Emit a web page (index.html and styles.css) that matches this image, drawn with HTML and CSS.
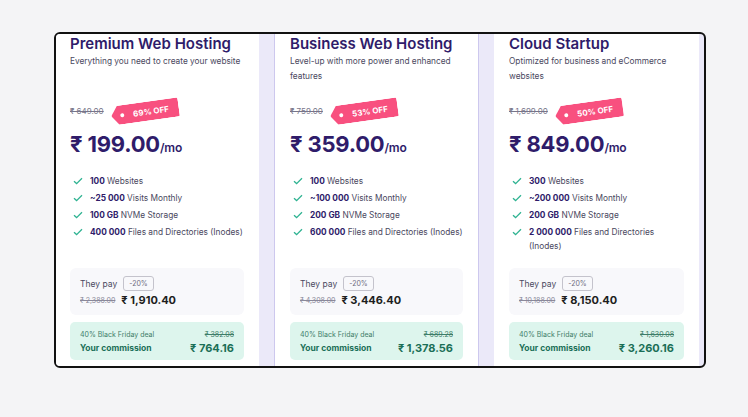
FILE: index.html
```html
<!DOCTYPE html>
<html>
<head>
<meta charset="utf-8">
<link rel="stylesheet" href="styles.css">
</head>
<body>
<div class="frame">
  <div class="card c1">
    <div class="title">Premium Web Hosting</div>
    <div class="sub">Everything you need to create your website</div>
    <div class="oldrow"><span class="old">₹ 649.00</span><span class="tag"><span class="dot"></span>69% OFF</span></div>
    <div class="price">₹ 199.00<span class="mo">/mo</span></div>
    <ul class="feats">
      <li><svg class="chk" viewBox="0 0 10 8"><path d="M1 4.2 L3.6 6.6 L9 1.2"/></svg><span><b>100</b> Websites</span></li>
      <li><svg class="chk" viewBox="0 0 10 8"><path d="M1 4.2 L3.6 6.6 L9 1.2"/></svg><span><b>~25 000</b> Visits Monthly</span></li>
      <li><svg class="chk" viewBox="0 0 10 8"><path d="M1 4.2 L3.6 6.6 L9 1.2"/></svg><span><b>100 GB</b> NVMe Storage</span></li>
      <li><svg class="chk" viewBox="0 0 10 8"><path d="M1 4.2 L3.6 6.6 L9 1.2"/></svg><span><b>400 000</b> Files and Directories (Inodes)</span></li>
    </ul>
    <div class="pay">
      <div class="payrow"><span>They pay</span><span class="pct">-20%</span></div>
      <div class="payrow2"><span class="old2">₹ 2,388.00</span><span class="paid">₹ 1,910.40</span></div>
    </div>
    <div class="comm">
      <div class="crow1"><span>40% Black Friday deal</span><span class="cold">₹ 382.08</span></div>
      <div class="crow2"><span>Your commission</span><span class="cval">₹ 764.16</span></div>
    </div>
  </div>
  <div class="card c2">
    <div class="title">Business Web Hosting</div>
    <div class="sub">Level-up with more power and enhanced features</div>
    <div class="oldrow"><span class="old">₹ 759.00</span><span class="tag"><span class="dot"></span>53% OFF</span></div>
    <div class="price">₹ 359.00<span class="mo">/mo</span></div>
    <ul class="feats">
      <li><svg class="chk" viewBox="0 0 10 8"><path d="M1 4.2 L3.6 6.6 L9 1.2"/></svg><span><b>100</b> Websites</span></li>
      <li><svg class="chk" viewBox="0 0 10 8"><path d="M1 4.2 L3.6 6.6 L9 1.2"/></svg><span><b>~100 000</b> Visits Monthly</span></li>
      <li><svg class="chk" viewBox="0 0 10 8"><path d="M1 4.2 L3.6 6.6 L9 1.2"/></svg><span><b>200 GB</b> NVMe Storage</span></li>
      <li><svg class="chk" viewBox="0 0 10 8"><path d="M1 4.2 L3.6 6.6 L9 1.2"/></svg><span><b>600 000</b> Files and Directories (Inodes)</span></li>
    </ul>
    <div class="pay">
      <div class="payrow"><span>They pay</span><span class="pct">-20%</span></div>
      <div class="payrow2"><span class="old2">₹ 4,308.00</span><span class="paid">₹ 3,446.40</span></div>
    </div>
    <div class="comm">
      <div class="crow1"><span>40% Black Friday deal</span><span class="cold">₹ 689.28</span></div>
      <div class="crow2"><span>Your commission</span><span class="cval">₹ 1,378.56</span></div>
    </div>
  </div>
  <div class="card c3">
    <div class="title">Cloud Startup</div>
    <div class="sub">Optimized for business and eCommerce websites</div>
    <div class="oldrow"><span class="old">₹ 1,699.00</span><span class="tag"><span class="dot"></span>50% OFF</span></div>
    <div class="price">₹ 849.00<span class="mo">/mo</span></div>
    <ul class="feats">
      <li><svg class="chk" viewBox="0 0 10 8"><path d="M1 4.2 L3.6 6.6 L9 1.2"/></svg><span><b>300</b> Websites</span></li>
      <li><svg class="chk" viewBox="0 0 10 8"><path d="M1 4.2 L3.6 6.6 L9 1.2"/></svg><span><b>~200 000</b> Visits Monthly</span></li>
      <li><svg class="chk" viewBox="0 0 10 8"><path d="M1 4.2 L3.6 6.6 L9 1.2"/></svg><span><b>200 GB</b> NVMe Storage</span></li>
      <li><svg class="chk" viewBox="0 0 10 8"><path d="M1 4.2 L3.6 6.6 L9 1.2"/></svg><span><b>2 000 000</b> Files and Directories (Inodes)</span></li>
    </ul>
    <div class="pay">
      <div class="payrow"><span>They pay</span><span class="pct">-20%</span></div>
      <div class="payrow2"><span class="old2">₹ 10,188.00</span><span class="paid">₹ 8,150.40</span></div>
    </div>
    <div class="comm">
      <div class="crow1"><span>40% Black Friday deal</span><span class="cold">₹ 1,630.08</span></div>
      <div class="crow2"><span>Your commission</span><span class="cval">₹ 3,260.16</span></div>
    </div>
  </div>
</div>
</body>
</html>
```
FILE: styles.css
```css
* { box-sizing: border-box; }
body {
  margin: 0;
  background: #f4f4f6;
  font-family: Inter, "DejaVu Sans", sans-serif;
  color: #36344d;
}
.frame {
  margin: 32px 0 0 54px;
  width: 652px;
  height: 336px;
  border: 2px solid #111;
  border-radius: 6px;
  overflow: hidden;
  background: #ebe9f9;
  display: flex;
  gap: 15px;
  padding-right: 5px;
}
.card {
  background: #fff;
  height: 100%;
  display: flex;
  flex-direction: column;
  padding: 0 15px 6px 15px;
}
.c1 { width: 203px; padding-left: 14px; }
.c2 { width: 205px; border-left: 1px solid #cdc8ee; border-right: 1px solid #cdc8ee; }
.c3 { width: 205px; }
.title {
  font-size: 15px;
  font-weight: 600;
  line-height: 20px;
  color: #2f1c6a;
}
.sub {
  font-size: 8.3px;
  line-height: 15px;
  min-height: 30px;
  color: #4a4860;
}
.oldrow {
  margin-top: 14px;
  height: 26px;
  display: flex;
  align-items: center;
}
.old {
  font-size: 8px;
  color: #77758a;
  text-decoration: line-through;
}
.tag {
  margin-left: 7px;
  display: inline-flex;
  align-items: center;
  height: 19px;
  padding: 0 10px 0 15px;
  background: #f8507f;
  color: #fff;
  font-size: 8px;
  font-weight: 700;
  clip-path: polygon(7px 0, 100% 0, 100% 100%, 7px 100%, 0 50%);
  border-radius: 2px;
  transform: rotate(-8deg);
  position: relative;
}
.dot {
  width: 4px;
  height: 4px;
  border-radius: 50%;
  background: #fff;
  margin-right: 9px;
  margin-left: -6px;
}
.price {
  margin-top: 6px;
  font-size: 22px;
  line-height: 28px;
  font-weight: 700;
  color: #2f1c6a;
  letter-spacing: -0.2px;
}
.mo {
  font-size: 12px;
  font-weight: 600;
}
.feats {
  list-style: none;
  margin: 10px 0 0 0;
  padding: 0;
}
.c1 .feats { margin-right: -4px; }
.feats li {
  display: flex;
  align-items: flex-start;
  font-size: 8.3px;
  line-height: 17px;
  color: #4a4860;
}
.feats li span { line-height: 14px; padding-top: 1.5px; padding-bottom: 1.5px; }
.feats b { color: #2f1c6a; font-weight: 700; }
.chk {
  width: 10px;
  height: 8px;
  margin: 4.5px 7px 0 3px;
  flex: none;
  fill: none;
  stroke: #2fb392;
  stroke-width: 1.3;
}
.pay {
  margin-top: auto;
  background: #f8f8fb;
  border-radius: 6px;
  padding: 8px 10px 7px 10px;
}
.payrow {
  display: flex;
  align-items: center;
  height: 15px;
  font-size: 8.5px;
  color: #4a4860;
}
.pct {
  margin-left: 6px;
  border: 1px solid #c4c3cc;
  border-radius: 3px;
  height: 15px;
  padding: 0 5px;
  font-size: 7px;
  line-height: 13px;
  color: #6f6d80;
}
.payrow2 {
  margin-top: 1px;
  height: 16px;
  display: flex;
  align-items: center;
}
.old2 {
  font-size: 7px;
  color: #8a889a;
  text-decoration: line-through;
  margin-right: 6px;
}
.paid {
  font-size: 11px;
  font-weight: 700;
  color: #1d1e20;
}
.comm {
  margin-top: 7px;
  background: #ddf5ed;
  border-radius: 5px;
  padding: 6px 10px 4px 10px;
  color: #1b6f57;
}
.crow1, .crow2 {
  display: flex;
  justify-content: space-between;
  align-items: center;
}
.crow1 {
  height: 12px;
  font-size: 7px;
  color: #3e7d69;
}
.cold { text-decoration: line-through; }
.crow2 {
  height: 16px;
  font-size: 8.5px;
  font-weight: 700;
}
.cval { font-size: 11px; }
```
